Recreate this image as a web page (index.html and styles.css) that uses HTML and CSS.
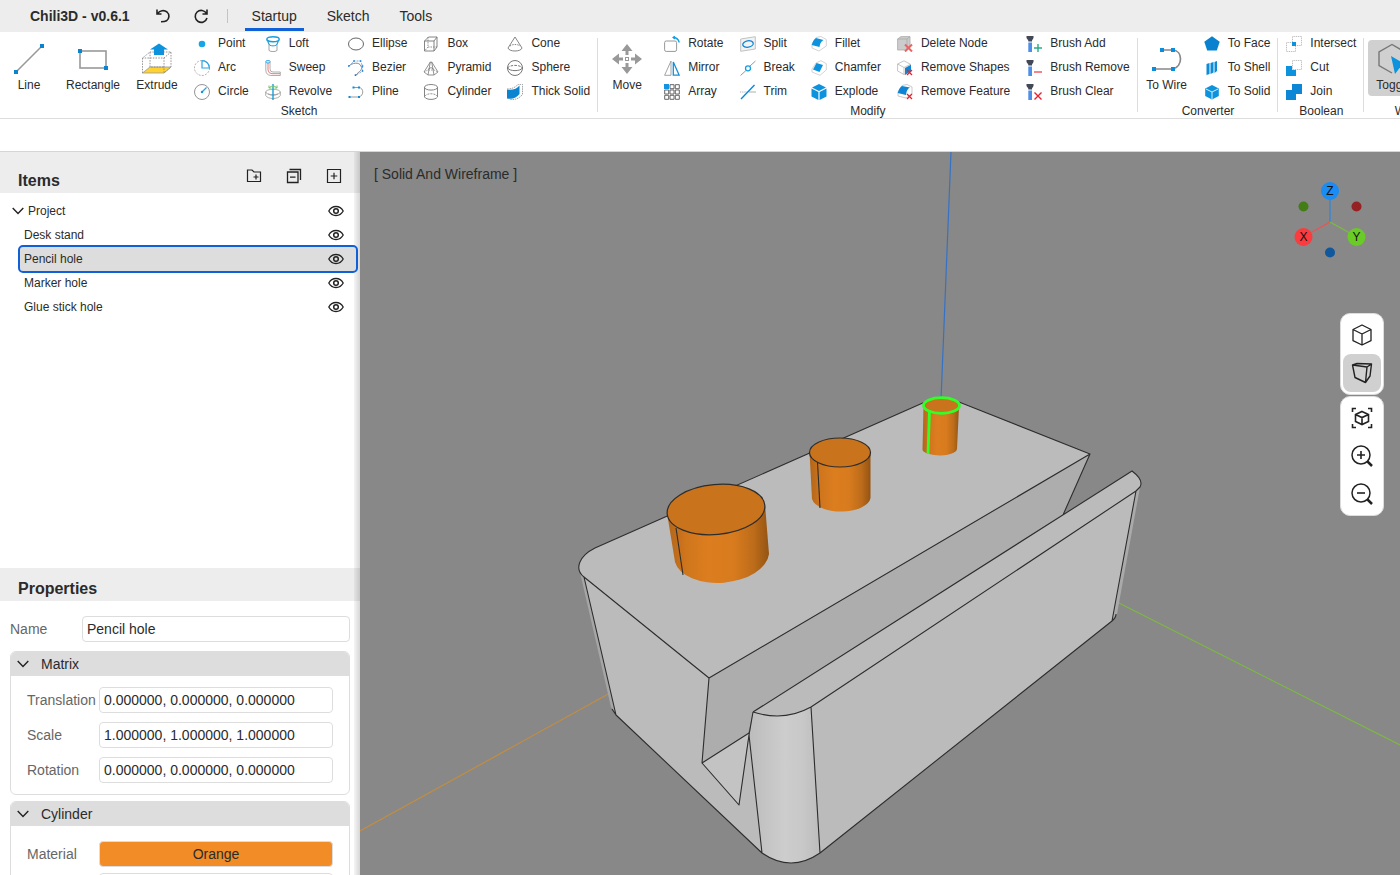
FILE: index.html
```html
<!DOCTYPE html>
<html lang="en">
<head>
<meta charset="utf-8">
<title>Chili3D - v0.6.1</title>
<link rel="stylesheet" href="styles.css">
</head>
<body>
<svg class="sprite" aria-hidden="true">
  <symbol id="i-line" viewBox="0 0 32 32"><path d="M3 29 29 3" stroke="#999" stroke-width="1.600"/><path d="M1 27h4v4H1zM27 1h4v4h-4z" fill="#0a84d0"/></symbol>
  <symbol id="i-rect" viewBox="0 0 32 32"><rect x="3" y="8" width="26" height="17" fill="none" stroke="#999" stroke-width="1.600"/><path d="M1 6h4v4H1zM27 23h4v4h-4z" fill="#0a84d0"/></symbol>
  <symbol id="i-extrude" viewBox="0 0 32 32"><path d="M1.500 30 9 24H30L23 30Z" fill="#ffd230" stroke="#999" stroke-width=".8"/><path d="M1.500 30V15L9 9H30V24L23 30V15H1.500M23 15l7-6M9 9v15h14" fill="none" stroke="#888" stroke-width=".9" stroke-dasharray="1.500 1.200"/><path d="M13 12V6.500H9l9-6 9 6h-4V12Z" fill="#0d92dd"/></symbol>
  <symbol id="i-point" viewBox="0 0 16 16"><circle cx="8" cy="8" r="3.300" fill="#18a5e5"/></symbol>
  <symbol id="i-arc" viewBox="0 0 16 16"><circle cx="8" cy="8" r="7.500" fill="none" stroke="#999" stroke-width=".8" stroke-dasharray="2 1.300"/><path d="M8 .6V8h7.400A7.400 7.400 0 0 0 8 .6" fill="none" stroke="#2ba4e4" stroke-width="1.200"/></symbol>
  <symbol id="i-circle" viewBox="0 0 16 16"><circle cx="8" cy="8" r="7.500" fill="none" stroke="#888" stroke-width=".9"/><path d="m8 8 4.500-4.500" stroke="#2ba4e4" stroke-width="1.200"/><circle cx="8" cy="8" r="1.200" fill="#168fdb"/></symbol>
  <symbol id="i-loft" viewBox="0 0 16 16"><path d="m2 3.500 2 5v6c2 1.500 6 1.500 8 0v-6l2-5" fill="none" stroke="#999" stroke-width=".9"/><ellipse cx="8" cy="3.200" rx="6.200" ry="2.500" fill="none" stroke="#159fe0" stroke-width="1.400"/><path d="m3 6 1.500 3c2 1.200 5 1.200 7 0L13 6" fill="none" stroke="#159fe0"/></symbol>
  <symbol id="i-sweep" viewBox="0 0 16 16"><path d="M.8 1.500V10q0 5 5 5.500h9.500v-3.500H8q-3 0-3-3V1.500" fill="none" stroke="#999" stroke-width=".8"/><path d="M3 2v8q.5 3.700 4 3.700h8" fill="none" stroke="#e86b6b" stroke-width=".9"/><ellipse cx="3" cy="1.700" rx="2.100" ry="1.400" fill="#c9ecff" stroke="#2ba4e4" stroke-width=".9"/></symbol>
  <symbol id="i-revolve" viewBox="0 0 16 16"><ellipse cx="8" cy="8" rx="7.300" ry="2.700" fill="none" stroke="#999" stroke-width=".8"/><path d="M.7 8v3.500c2 4 12.600 4 14.600 0V8M3 10c3 1.800 7 1.800 10 0" fill="none" stroke="#999" stroke-width=".8"/><path d="M8 0v16" stroke="#159fe0" stroke-width="1.400"/><path d="M4 4c1.500-2.500 6.500-2.500 8 0M4 1.500V4h2.500M12 1.500V4H9.500" fill="none" stroke="#75c465"/></symbol>
  <symbol id="i-ellipse" viewBox="0 0 16 16"><ellipse cx="8" cy="8" rx="7.500" ry="6" fill="none" stroke="#666"/></symbol>
  <symbol id="i-bezier" viewBox="0 0 16 16"><path d="M1 6C4 3 11 1.500 13 6s-2 5-5.500 9.500" fill="none" stroke="#888"/><path d="M1 6 6 1h6.500l2 5v5l-7 4.500" fill="none" stroke="#4a94e8" stroke-width=".8" stroke-dasharray="2 1.200"/><path d="M0 5.200h1.600v1.600H0zM5.200.2h1.600v1.600H5.200zM11.700.2h1.600v1.600h-1.600zM13.700 5.200h1.600v1.600h-1.600zM13.700 10.200h1.600v1.600h-1.600zM6.700 14.300h1.600v1.600H6.700z" fill="#187bd5"/></symbol>
  <symbol id="i-pline" viewBox="0 0 32 32"><path d="M3 26h19c10-3 10-18 0-19H11" fill="none" stroke="#888" stroke-width="1.700"/><path d="M1 24h4v4H1zM20 24h4v4h-4zM9 5h4v4H9zM20 5h4v4h-4z" fill="#0a8ddc"/></symbol>
  <symbol id="i-box" viewBox="0 0 16 16"><path d="M1.500 5H11v10H1.500ZM1.500 5l4-4H14v10l-3 4M11 5l3-4" fill="none" stroke="#777" stroke-width=".9"/><path d="M5 1v10h9M5 11l-3.500 4" fill="none" stroke="#777" stroke-width=".8" stroke-dasharray="1.500 1"/></symbol>
  <symbol id="i-pyramid" viewBox="0 0 16 16"><path d="m1 12 6.300-10h1.400L15 12l-4 3H5ZM7.300 2 5 15M8.700 2 11 15M5 9.500l3-2 3 2" fill="none" stroke="#777" stroke-width=".8"/><path d="m1 12 4-2h6l4 2" fill="none" stroke="#888" stroke-width=".8" stroke-dasharray="1.500 1"/></symbol>
  <symbol id="i-cyl" viewBox="0 0 16 16"><ellipse cx="8" cy="3.300" rx="6.500" ry="2.800" fill="none" stroke="#777" stroke-width=".9"/><path d="M1.500 3.300V13c2 3.200 11 3.200 13 0V3.300" fill="none" stroke="#777" stroke-width=".9"/><path d="M2 12c2-3 10-3 12 0" fill="none" stroke="#888" stroke-width=".9" stroke-dasharray="2 1"/></symbol>
  <symbol id="i-cone" viewBox="0 0 16 16"><path d="M8 1 1 12c1 4 13 4 14 0Z" fill="none" stroke="#777" stroke-width=".9"/><path d="M3 10c2-2 8-2 10 0" fill="none" stroke="#777" stroke-width=".9" stroke-dasharray="1.500 1"/></symbol>
  <symbol id="i-sphere" viewBox="0 0 16 16"><circle cx="8" cy="8" r="7.500" fill="none" stroke="#666" stroke-width=".9"/><path d="M.6 8c2 3.500 12.800 3.500 14.800 0" fill="none" stroke="#666" stroke-width=".9"/><path d="M.6 8c2-3.500 12.800-3.500 14.800 0" fill="none" stroke="#666" stroke-width=".9" stroke-dasharray="2.500 1.200"/></symbol>
  <symbol id="i-thick" viewBox="0 0 16 16"><path d="M0 5.500c5 1 10-.5 12.500-4V10c-3 4-7 5.500-12.500 4.500Z" fill="#0a84d0"/><path d="M0 5c5 0 8-1.500 11-4.500l4.500-.2v10c-3 4-7 5.700-13 5.200" fill="none" stroke="#888" stroke-width=".8" stroke-dasharray="1.500 .8"/></symbol>
  <symbol id="i-move" viewBox="0 0 32 32"><path d="m16 1 5.500 7h-4v4h-3V8h-4ZM16 31l5.500-7h-4v-4h-3v4h-4ZM1 16l7-5.500v4h4v3H8v4ZM31 16l-7-5.500v4h-4v3h4v4Z" fill="#999"/><rect x="14.500" y="14.500" width="3" height="3" fill="none" stroke="#999"/></symbol>
  <symbol id="i-rotate" viewBox="0 0 16 16"><rect x=".6" y="5" width="12" height="10.400" rx="1.600" fill="none" stroke="#999"/><path d="M9 1.500q5 0 6.300 5" fill="none" stroke="#159fe0" stroke-width="1.300"/><path d="m8 1.500 3-2v4Z" fill="#159fe0"/></symbol>
  <symbol id="i-mirror" viewBox="0 0 16 16"><path d="M7 1v14.300H.6Z" fill="none" stroke="#999" stroke-width=".9"/><path d="M9.300 2V15.200h5.900Z" fill="none" stroke="#168fdb" stroke-width="1.300"/></symbol>
  <symbol id="i-array" viewBox="0 0 16 16"><path d="M6 .7h4v4H6zM11.300.7h4v4h-4zM.7 6h4v4h-4zM6 6h4v4H6zM11.300 6h4v4h-4zM.7 11.300h4v4h-4zM6 11.300h4v4H6zM11.300 11.300h4v4h-4z" fill="none" stroke="#666"/><path d="M0 0h5v5H0z" fill="#1493e0"/></symbol>
  <symbol id="i-split" viewBox="0 0 16 16"><path d="M.7 3 15.300.7V13L.7 15.300Z" fill="#f2f2f2" stroke="#bbb" stroke-width=".9"/><ellipse cx="8" cy="8" rx="5.300" ry="3.200" fill="none" stroke="#0d86d5" stroke-width="1.300" transform="rotate(-10 8 8)"/></symbol>
  <symbol id="i-break" viewBox="0 0 16 16"><path d="m.5 15.500 5.500-5M10 6l5.500-5" stroke="#999"/><circle cx="8" cy="8.300" r="2.500" fill="none" stroke="#159fe0" stroke-width="1.300"/></symbol>
  <symbol id="i-trim" viewBox="0 0 16 16"><path d="M9 8h7" stroke="#999" stroke-width=".8"/><path d="M0 8h8" stroke="#999" stroke-width=".8" stroke-dasharray="1.200 1"/><path d="M1 15 14.500 1" stroke="#0d86d5" stroke-width="1.400"/></symbol>
  <symbol id="i-fillet" viewBox="0 0 16 16"><path d="M5 1.500 10 .5l5.300 3V10L8 15 1 12V8Z" fill="#fff" stroke="#c8c8c8" stroke-width=".8"/><path d="m5 2 7.500 2Q9 6 8.500 11L.7 9Q2 4 5 2Z" fill="#0d92dd"/></symbol>
  <symbol id="i-chamfer" viewBox="0 0 16 16"><path d="M5 3 10 .7l5.300 3V10L9 15.300 1 12V9Z" fill="#fff" stroke="#c8c8c8" stroke-width=".8"/><path d="m5.500 3 6.500 2-3.500 7L2 9.500Z" fill="#0d92dd"/></symbol>
  <symbol id="i-cube" viewBox="0 0 16 16"><path d="m8 0 7 3.500L8 7 1 3.500ZM.5 4.500 7.400 8v8L.5 12.500ZM15.500 4.500 8.600 8v8l6.900-3.500Z" fill="#0d92dd"/></symbol>
  <symbol id="i-delnode" viewBox="0 0 16 16"><path d="M.6 3 4 .6h9V11l-3 3H.6Z" fill="#ccc" stroke="#aaa" stroke-width=".8"/><path d="M.6 3H10v10M10 3l3-2.400" fill="none" stroke="#aaa" stroke-width=".8"/><path d="m8 8.500 7 7m0-7-7 7" stroke="#ea6464" stroke-width="2"/></symbol>
  <symbol id="i-remshape" viewBox="0 0 16 16"><path d="m7 .8 6.500 3.500V11L7 14.500.6 11V4Z M.6 4 7 7.500l6.500-3.200M7 7.500v7" fill="#fff" stroke="#b5b5b5" stroke-width=".8"/><path d="m8 8 6-3.200v6L8 15Z" fill="#0d84d4"/><path d="m10 10 5 5m0-5-5 5" stroke="#e6232c" stroke-width="1.300"/></symbol>
  <symbol id="i-remfeat" viewBox="0 0 16 16"><path d="M5 1.500 10 .5l5 2.500v7L9 14 1 12V8Z" fill="#fff" stroke="#bbb" stroke-width=".8"/><path d="m5 2 8 1.500Q9.500 5 9 11L.7 9Q2 4 5 2Z" fill="#0d84d4"/><path d="m10 10 5 5m0-5-5 5" stroke="#e6232c" stroke-width="1.300"/></symbol>
  <symbol id="i-brush" viewBox="0 0 16 16"><path d="M.5 0h7v2L6 4.500v1H2.300v-1L.5 2Z" fill="#434856"/><path d="M2.300 6.500H6V16H2.300Z" fill="#4d8ee8"/></symbol>
  <symbol id="i-badd" viewBox="0 0 16 16"><use href="#i-brush"/><path d="M8 12h8M12 8v8" stroke="#29ad85" stroke-width="1.400"/></symbol>
  <symbol id="i-brem" viewBox="0 0 16 16"><use href="#i-brush"/><path d="M8 12h8" stroke="#f55a60" stroke-width="1.500"/></symbol>
  <symbol id="i-bclr" viewBox="0 0 16 16"><use href="#i-brush"/><path d="m8.500 8.500 7 7m0-7-7 7" stroke="#e6232c" stroke-width="1.400"/></symbol>
  <symbol id="i-face" viewBox="0 0 16 16"><path d="m8 .3 7.700 5.400-2.900 8.800H3.200L.3 5.700Z" fill="#0882ce"/></symbol>
  <symbol id="i-shell" viewBox="0 0 16 16"><path d="m2.500 4 3-1v11l-3 1ZM6.500 3l3-1v10.500l-3 1.500ZM10.500 2 13 1v10l-2.500 2Z" fill="#0b8bd8"/></symbol>
  <symbol id="i-solid" viewBox="0 0 16 16"><path d="m8 1 6.800 3.500V12L8 15.500 1.200 12V4.500Z" fill="#0d92dd"/><path d="m2 5 6 3 6-3M8 8v7" fill="none" stroke="#d5efff"/></symbol>
  <symbol id="i-inter" viewBox="0 0 16 16"><path d="M6.500.5h9v9h-9ZM.5 6.500h9v9h-9Z" fill="none" stroke="#999" stroke-dasharray="1 .8" stroke-width=".7"/><path d="M6 6h4v4H6Z" fill="#0d92dd"/></symbol>
  <symbol id="i-cut" viewBox="0 0 16 16"><path d="M6.500.5h9v9h-9Z" fill="none" stroke="#999" stroke-dasharray="1 .8" stroke-width=".7"/><path d="M0 6h6v4h4v6H0Z" fill="#0d92dd"/></symbol>
  <symbol id="i-join" viewBox="0 0 16 16"><path d="M6 0h10v10h-6v6H0V6h6Z" fill="#0d86d5"/></symbol>
  <symbol id="i-toggle" viewBox="0 0 32 32"><path d="m14 30-13-7.500V9l13-7.500L27 9v6" fill="none" stroke="#777" stroke-width="1.400"/><path d="m13 13 17 10-8.500 2-4.500 6Z" fill="#0d92dd"/></symbol>
  <symbol id="i-eye" viewBox="0 0 16 16"><path d="M.8 8C4 2 12 2 15.200 8 12 14 4 14 .8 8Z" fill="none" stroke="#222" stroke-width="1.300"/><circle cx="8" cy="8" r="2.300" fill="none" stroke="#222" stroke-width="1.500"/></symbol>
  <symbol id="i-chev" viewBox="0 0 12 12"><path d="m.7 3 5.300 5.500L11.300 3" fill="none" stroke="#222" stroke-width="1.400"/></symbol>
  <linearGradient id="g-big"><stop offset="0" stop-color="#b0651a"/><stop offset=".18" stop-color="#cf751c"/><stop offset=".4" stop-color="#dc7e1f"/><stop offset=".65" stop-color="#d87b1e"/><stop offset=".85" stop-color="#bd6c1a"/><stop offset="1" stop-color="#935413"/></linearGradient>
  <linearGradient id="g-round"><stop offset="0" stop-color="#bcbcbc"/><stop offset=".5" stop-color="#cdcdcd"/><stop offset=".75" stop-color="#c8c8c8"/><stop offset="1" stop-color="#bcbcbc"/></linearGradient>
</svg>

<header class="titlebar">
  <h1 class="app-name">Chili3D - v0.6.1</h1>
  <button class="icon-btn" aria-label="Undo"><svg width="16" height="16" viewBox="0 0 16 16"><path d="M2 1.500V6h4.500M2.500 5.500C5 2.500 9 1.700 12 4c3 2.500 2.300 7-.5 8.700-1.500.9-3.500 1-5.500 1" fill="none" stroke="#222" stroke-width="1.600"/></svg></button>
  <button class="icon-btn" aria-label="Redo"><svg width="16" height="16" viewBox="0 0 16 16"><path d="M14 1.500V6H9.500M13.500 5.500A6 6 0 1 0 14 10" fill="none" stroke="#222" stroke-width="1.600"/></svg></button>
  <span class="title-sep"></span>
  <nav class="tabs"><a class="tab active" href="#startup">Startup</a><a class="tab" href="#sketch">Sketch</a><a class="tab" href="#tools">Tools</a></nav>
</header>

<div class="ribbon">
  <section class="group"><div class="tools">
    <button class="big"><svg><use href="#i-line"/></svg>Line</button>
    <button class="big"><svg><use href="#i-rect"/></svg>Rectangle</button>
    <button class="big"><svg><use href="#i-extrude"/></svg>Extrude</button>
    <div class="col"><button class="small"><svg><use href="#i-point"/></svg>Point</button><button class="small"><svg><use href="#i-arc"/></svg>Arc</button><button class="small"><svg><use href="#i-circle"/></svg>Circle</button></div>
    <div class="col"><button class="small"><svg><use href="#i-loft"/></svg>Loft</button><button class="small"><svg><use href="#i-sweep"/></svg>Sweep</button><button class="small"><svg><use href="#i-revolve"/></svg>Revolve</button></div>
    <div class="col"><button class="small"><svg><use href="#i-ellipse"/></svg>Ellipse</button><button class="small"><svg><use href="#i-bezier"/></svg>Bezier</button><button class="small"><svg><use href="#i-pline"/></svg>Pline</button></div>
    <div class="col"><button class="small"><svg><use href="#i-box"/></svg>Box</button><button class="small"><svg><use href="#i-pyramid"/></svg>Pyramid</button><button class="small"><svg><use href="#i-cyl"/></svg>Cylinder</button></div>
    <div class="col"><button class="small"><svg><use href="#i-cone"/></svg>Cone</button><button class="small"><svg><use href="#i-sphere"/></svg>Sphere</button><button class="small"><svg><use href="#i-thick"/></svg>Thick Solid</button></div>
  </div><h2 class="group-name">Sketch</h2></section>
  <section class="group"><div class="tools">
    <button class="big"><svg><use href="#i-move"/></svg>Move</button>
    <div class="col"><button class="small"><svg><use href="#i-rotate"/></svg>Rotate</button><button class="small"><svg><use href="#i-mirror"/></svg>Mirror</button><button class="small"><svg><use href="#i-array"/></svg>Array</button></div>
    <div class="col"><button class="small"><svg><use href="#i-split"/></svg>Split</button><button class="small"><svg><use href="#i-break"/></svg>Break</button><button class="small"><svg><use href="#i-trim"/></svg>Trim</button></div>
    <div class="col"><button class="small"><svg><use href="#i-fillet"/></svg>Fillet</button><button class="small"><svg><use href="#i-chamfer"/></svg>Chamfer</button><button class="small"><svg><use href="#i-cube"/></svg>Explode</button></div>
    <div class="col"><button class="small"><svg><use href="#i-delnode"/></svg>Delete Node</button><button class="small"><svg><use href="#i-remshape"/></svg>Remove Shapes</button><button class="small"><svg><use href="#i-remfeat"/></svg>Remove Feature</button></div>
    <div class="col"><button class="small"><svg><use href="#i-badd"/></svg>Brush Add</button><button class="small"><svg><use href="#i-brem"/></svg>Brush Remove</button><button class="small"><svg><use href="#i-bclr"/></svg>Brush Clear</button></div>
  </div><h2 class="group-name">Modify</h2></section>
  <section class="group"><div class="tools">
    <button class="big"><svg><use href="#i-pline"/></svg>To Wire</button>
    <div class="col"><button class="small"><svg><use href="#i-face"/></svg>To Face</button><button class="small"><svg><use href="#i-shell"/></svg>To Shell</button><button class="small"><svg><use href="#i-solid"/></svg>To Solid</button></div>
  </div><h2 class="group-name">Converter</h2></section>
  <section class="group"><div class="tools">
    <div class="col"><button class="small"><svg><use href="#i-inter"/></svg>Intersect</button><button class="small"><svg><use href="#i-cut"/></svg>Cut</button><button class="small"><svg><use href="#i-join"/></svg>Join</button></div>
  </div><h2 class="group-name">Boolean</h2></section>
  <section class="group wide"><div class="tools">
    <button class="big pressed"><svg><use href="#i-toggle"/></svg>Toggle</button>
  </div><h2 class="group-name">Workplane</h2></section>
</div>
<div class="context-bar"></div>

<main class="workspace">
  <aside class="sidebar">
    <section class="items">
      <header class="panel-head items-head"><h2 class="panel-title">Items</h2>
        <button class="icon-btn" aria-label="New folder"><svg width="16" height="16" viewBox="0 0 16 16"><path d="M1.500 2h4.500l2 2h6.500v9.500h-13ZM10 6.500v5M7.500 9h5" fill="none" stroke="#222" stroke-width="1.200"/></svg></button>
        <button class="icon-btn" aria-label="Collapse all"><svg width="16" height="16" viewBox="0 0 16 16"><path d="M1.500 4h10.500v10.500H1.500ZM4 9.200h5.500M3.500 1.500h11V12" fill="none" stroke="#222" stroke-width="1.300"/></svg></button>
        <button class="icon-btn" aria-label="Expand all"><svg width="16" height="16" viewBox="0 0 16 16"><path d="M1.500 1.500h13v13h-13ZM8 4.700v6.600M4.700 8h6.600" fill="none" stroke="#222" stroke-width="1.200"/></svg></button>
      </header>
      <ul class="tree">
        <li class="row root"><svg class="chev"><use href="#i-chev"/></svg><span class="row-name">Project</span><button class="eye" aria-label="Toggle Project"><svg><use href="#i-eye"/></svg></button></li>
        <li class="row"><span class="row-name">Desk stand</span><button class="eye" aria-label="Toggle Desk stand"><svg><use href="#i-eye"/></svg></button></li>
        <li class="row selected"><span class="row-name">Pencil hole</span><button class="eye" aria-label="Toggle Pencil hole"><svg><use href="#i-eye"/></svg></button></li>
        <li class="row"><span class="row-name">Marker hole</span><button class="eye" aria-label="Toggle Marker hole"><svg><use href="#i-eye"/></svg></button></li>
        <li class="row"><span class="row-name">Glue stick hole</span><button class="eye" aria-label="Toggle Glue stick hole"><svg><use href="#i-eye"/></svg></button></li>
      </ul>
    </section>
    <section class="props">
      <header class="panel-head"><h2 class="panel-title">Properties</h2></header>
      <div class="props-body">
        <div class="field name-field"><label for="name">Name</label><input id="name" type="text" value="Pencil hole"></div>
        <section class="card"><h3 class="card-head"><svg class="chev"><use href="#i-chev"/></svg>Matrix</h3>
          <div class="card-body">
            <div class="field"><label for="tr">Translation</label><input id="tr" type="text" value="0.000000, 0.000000, 0.000000"></div>
            <div class="field"><label for="sc">Scale</label><input id="sc" type="text" value="1.000000, 1.000000, 1.000000"></div>
            <div class="field"><label for="ro">Rotation</label><input id="ro" type="text" value="0.000000, 0.000000, 0.000000"></div>
          </div>
        </section>
        <section class="card"><h3 class="card-head"><svg class="chev"><use href="#i-chev"/></svg>Cylinder</h3>
          <div class="card-body shape-body">
            <div class="field"><label for="mat">Material</label><button id="mat" class="material">Orange</button></div>
            <div class="field indent"><input type="text" aria-label="Center"></div>
          </div>
        </section>
      </div>
    </section>
  </aside>

  <section class="viewport">
    <svg class="scene" viewBox="360 152 1040 723" preserveAspectRatio="xMidYMid slice">
      <path d="M951 152 941 400" stroke="#3672c4" stroke-width="1.200"/>
      <path d="M360 831 612 692" stroke="#c18d43" stroke-width="1.200"/>
      <path d="M1115 601 1400 745" stroke="#7db843" stroke-width="1.200"/>
      <g stroke-linejoin="round">
        <path d="M579 568 611 707 617 716 585 577Z" fill="#a6a6a6"/>
        <path d="M584 577 709 678 702 763 739 805 749 735 762 853 616 715Z" fill="#bbb"/>
        <path d="M925 402 595 548C579 556 574 569 584 577L709 678 1090 454 959 402Z" fill="#bbb"/>
        <path d="M709 678 1090 454 1063 515 753 712 748 734 702 763Z" fill="#adadad"/>
        <path d="M702 763 749 733 739 805Z" fill="#c3c3c3"/>
        <path d="M753 712 1132 471Q1144 480 1140 487L1136 491 811 707Q784 722 753 712Z" fill="#bbb"/>
        <path d="M1135 491 1140 487 1117 614 1111 621Z" fill="#aaa"/>
        <path d="M811 707 1136 491 1112 621 820 853Z" fill="#bbb"/>
        <path d="M753 712Q784 722 811 707L820 853Q791 873 762 853L749 738Z" fill="url(#g-round)"/>
        <g fill="none" stroke="#2d2d2d" stroke-width="1.100">
          <path d="M925 402 595 548C579 556 574 569 584 577L709 678 1090 454 959 402M709 678 702 763 739 805 749 735 753 712M702 763 749 733M749 735 762 853Q791 873 820 853L811 707M1090 454 1063 515M753 712 1132 471Q1144 480 1140 487L1136 491 811 707Q784 722 753 712M820 853 1112 621 1136 491M1112 621Q1116 618 1116 614M762 853 616 715 584 577M616 715 612 709"/>
        </g>
        <path d="M667 513 675 562A47.500 28-5 0 0 769 554L765 504Z" fill="url(#g-big)"/>
        <ellipse cx="716" cy="509.500" rx="49" ry="25" transform="rotate(-5 716 509.500)" fill="#c9731c" stroke="#2d2d2d" stroke-width="1.200"/>
        <path d="M676 528 683 575" stroke="#2d2d2d" stroke-width="1.100"/>
        <path d="M809.500 452 812 499A29.500 15 0 0 0 870.500 498L870.500 452Z" fill="url(#g-big)"/>
        <ellipse cx="840" cy="452.500" rx="30.500" ry="14.500" fill="#c9731c" stroke="#2d2d2d" stroke-width="1.200"/>
        <path d="M817.500 462 820 508" stroke="#2d2d2d" stroke-width="1.100"/>
        <path d="M923.500 406 922.500 450A17.500 7 0 0 0 957 449L959 406Z" fill="url(#g-big)"/>
        <ellipse cx="941.500" cy="405.500" rx="18" ry="7.800" fill="#c9731c" stroke="#32ff28" stroke-width="2.800"/>
        <path d="M929.500 411 928 454" stroke="#32ff28" stroke-width="2.800"/>
      </g>
    </svg>
    <span class="mode">[ Solid And Wireframe ]</span>
    <div class="view-tools">
      <svg class="gizmo" width="76" height="84" viewBox="1292 180 76 84">
        <path d="M1330 222V191" stroke="#3a86d2" stroke-width="1.400"/><path d="m1330 222-27 15" stroke="#ef5252" stroke-width="1.400"/><path d="m1330 222 27 15" stroke="#79bd3f" stroke-width="1.400"/>
        <circle cx="1303.500" cy="206.500" r="5" fill="#437d16"/><circle cx="1356.500" cy="206.500" r="5" fill="#942223"/><circle cx="1330" cy="252.500" r="5" fill="#10579b"/>
        <circle cx="1330" cy="191" r="9" fill="#1a8cf5"/><circle cx="1303.500" cy="237" r="9" fill="#fb3b3d"/><circle cx="1356.500" cy="237" r="9" fill="#6bcb26"/>
        <g class="axis-name"><text x="1330" y="195">Z</text><text x="1303.500" y="241">X</text><text x="1356.500" y="241">Y</text></g>
      </svg>
      <div class="tool-box">
        <button class="view-btn" aria-label="Orthographic"><svg viewBox="0 0 24 24"><path d="m12 2 9 4.500v11.200L12 22l-9-4.300V6.500ZM3 6.500l9 4.500 9-4.500M12 11v11" fill="none" stroke="#222" stroke-width="1.300" stroke-linejoin="round"/></svg></button>
        <button class="view-btn on" aria-label="Perspective"><svg viewBox="0 0 24 24"><path d="M2.500 4 7 2.500l14.500.5L17 6ZM17 6l-1.500 15.500L5 16.500 2.500 4M21.500 3 20 15l-4.500 6.500" fill="none" stroke="#222" stroke-width="1.400" stroke-linejoin="round"/></svg></button>
      </div>
      <div class="tool-box">
        <button class="view-btn" aria-label="Fit view"><svg viewBox="0 0 24 24"><path d="M2.500 6V2.500H6M18 2.500h3.500V6M21.500 18v3.500H18M6 21.500H2.500V18M12 5.500l6.500 3v7L12 18.500l-6.500-3v-7ZM5.500 8.500l6.500 3 6.500-3M12 11.500v7" fill="none" stroke="#222" stroke-width="1.600"/></svg></button>
        <button class="view-btn" aria-label="Zoom in"><svg viewBox="0 0 24 24"><circle cx="11" cy="11" r="9" fill="none" stroke="#222" stroke-width="1.500"/><path d="M7 11h8M11 7v8" stroke="#222" stroke-width="1.600"/><path d="m17.500 17.500 4.500 4.500" stroke="#222" stroke-width="2.500"/></svg></button>
        <button class="view-btn" aria-label="Zoom out"><svg viewBox="0 0 24 24"><circle cx="11" cy="11" r="9" fill="none" stroke="#222" stroke-width="1.500"/><path d="M7 11h8" stroke="#222" stroke-width="1.600"/><path d="m17.500 17.500 4.500 4.500" stroke="#222" stroke-width="2.500"/></svg></button>
      </div>
    </div>
  </section>
</main>
</body>
</html>
```

FILE: styles.css
```css
* { box-sizing: border-box; }
body {
  margin: 0;
  height: 100vh;
  display: flex;
  flex-direction: column;
  overflow: hidden;
  background: #fff;
  color: #2b2b2b;
  font: 14px "Liberation Sans", Arial, sans-serif;
}
h1, h2, h3, ul { margin: 0; padding: 0; }
button { border: 0; padding: 0; background: none; font: inherit; color: inherit; }
.sprite { position: absolute; width: 0; height: 0; }

.titlebar {
  flex: none;
  display: flex;
  align-items: center;
  height: 32px;
  padding-left: 30px;
  background: #ededed;
}
.app-name { font-size: 14px; font-weight: bold; margin-right: 21px; }
.icon-btn { display: flex; justify-content: center; width: 24px; margin-right: 14px; }
.title-sep { width: 1px; height: 14px; margin-right: 17px; background: #c4c4c4; }
.tabs { display: flex; gap: 16px; align-self: stretch; }
.tab {
  display: flex;
  align-items: center;
  height: 31px;
  padding: 3px 7px 0;
  border-bottom: 3px solid transparent;
  color: inherit;
  text-decoration: none;
}
.tab.active { border-color: #1060d8; }

.ribbon {
  flex: none;
  display: flex;
  overflow: hidden;
  border-bottom: 1px solid #ddd;
  font-size: 12px;
  line-height: 14px;
}
.group { flex: none; position: relative; }
.group::after {
  content: "";
  position: absolute;
  top: 6px;
  right: 0;
  bottom: 6px;
  width: 1px;
  background: #ddd;
}
.wide { min-width: 118px; }
.tools { display: flex; height: 72px; }
.group-name { height: 14px; font-size: 12px; font-weight: normal; text-align: center; }
.big {
  display: flex;
  flex-direction: column;
  align-items: center;
  gap: 3px;
  min-width: 58px;
  padding: 11px 8px 0;
  white-space: nowrap;
}
.big svg { width: 32px; height: 32px; }
.pressed {
  min-width: 50px;
  height: 56px;
  margin: 8px 4px;
  padding-top: 3px;
  border-radius: 4px;
  background: #d0d0d0;
}
.small {
  display: flex;
  align-items: center;
  gap: 8px;
  height: 24px;
  padding: 0 8px 2px;
  white-space: nowrap;
}
.small svg { flex: none; width: 16px; height: 16px; margin-top: 2px; overflow: visible; }
.context-bar { flex: none; height: 33px; border-bottom: 1px solid #d4d6d4; }

.workspace { flex: 1; display: flex; min-height: 0; }
.sidebar {
  position: relative;
  flex: none;
  width: 360px;
  display: flex;
  flex-direction: column;
}
.sidebar::after {
  content: "";
  position: absolute;
  top: 0;
  right: 0;
  bottom: 0;
  width: 6px;
  background: linear-gradient(90deg, rgba(0, 0, 0, .04), rgba(0, 0, 0, .16));
}
.items { flex: 416; min-height: 0; }
.props { flex: 307; min-height: 0; overflow: hidden; }
.panel-head { display: flex; align-items: center; height: 33px; padding: 9px 0 0 18px; background: #ededed; }
.panel-title { flex: 1; font-size: 16px; line-height: 18px; }
.items-head { height: 41px; padding: 7px 14px 0 18px; }
.items-head .panel-title { padding-top: 10px; }
.items-head .icon-btn { margin: 0 0 0 16px; }
.tree { list-style: none; padding: 6px 4px 0 0; font-size: 12px; }
.row {
  position: relative;
  z-index: 1;
  display: flex;
  align-items: center;
  height: 24px;
  margin-left: 20px;
  padding: 0 12px 0 4px;
}
.root { margin-left: 8px; gap: 4px; }
.row-name { flex: 1; }
.selected { background: #ddd; outline: 2px solid #1060d8; border-radius: 3px; }
.chev { flex: none; width: 12px; height: 12px; }
.eye { display: flex; }
.eye svg { width: 16px; height: 16px; }

.props-body { display: flex; flex-direction: column; padding: 15px 10px 0; }
.field { display: flex; align-items: center; height: 26px; }
.field label { flex: none; width: 72px; color: #666; }
.field input {
  flex: 1;
  min-width: 0;
  height: 26px;
  padding: 0 4px;
  border: 1px solid #ddd;
  border-radius: 4px;
  background: #fff;
  color: #2b2b2b;
  font: inherit;
}
.indent { padding-left: 72px; }
.name-field { margin-bottom: 9px; }
.card { margin-bottom: 6px; border: 1px solid #ddd; border-radius: 6px; overflow: hidden; }
.card-head {
  display: flex;
  align-items: center;
  gap: 12px;
  height: 24px;
  padding-left: 6px;
  background: #ddd;
  font-size: 14px;
  font-weight: normal;
}
.card-body { display: flex; flex-direction: column; gap: 9px; padding: 11px 16px; }
.shape-body { gap: 6px; padding-top: 15px; }
.material { flex: 1; height: 26px; border: 1px solid #ddd; border-radius: 4px; background: #f28c26; }

.viewport { position: relative; flex: 1; min-width: 0; background: #888; }
.scene { position: absolute; width: 100%; height: 100%; }
.mode { position: absolute; top: 14px; left: 14px; color: #2b2b2b; }
.view-tools {
  position: absolute;
  top: 28px;
  right: 16px;
  display: flex;
  flex-direction: column;
  align-items: flex-end;
  gap: 1px;
}
.gizmo { margin: 0 16px 48px 0; }
.axis-name { font-size: 12px; text-anchor: middle; fill: #111; }
.tool-box { padding: 2px; border: 1px solid #ddd; border-radius: 10px; background: #fff; }
.view-btn { display: flex; align-items: center; justify-content: center; width: 38px; height: 38px; border-radius: 8px; }
.view-btn svg { width: 24px; height: 24px; }
.on { background: #d0d0d0; }
```
